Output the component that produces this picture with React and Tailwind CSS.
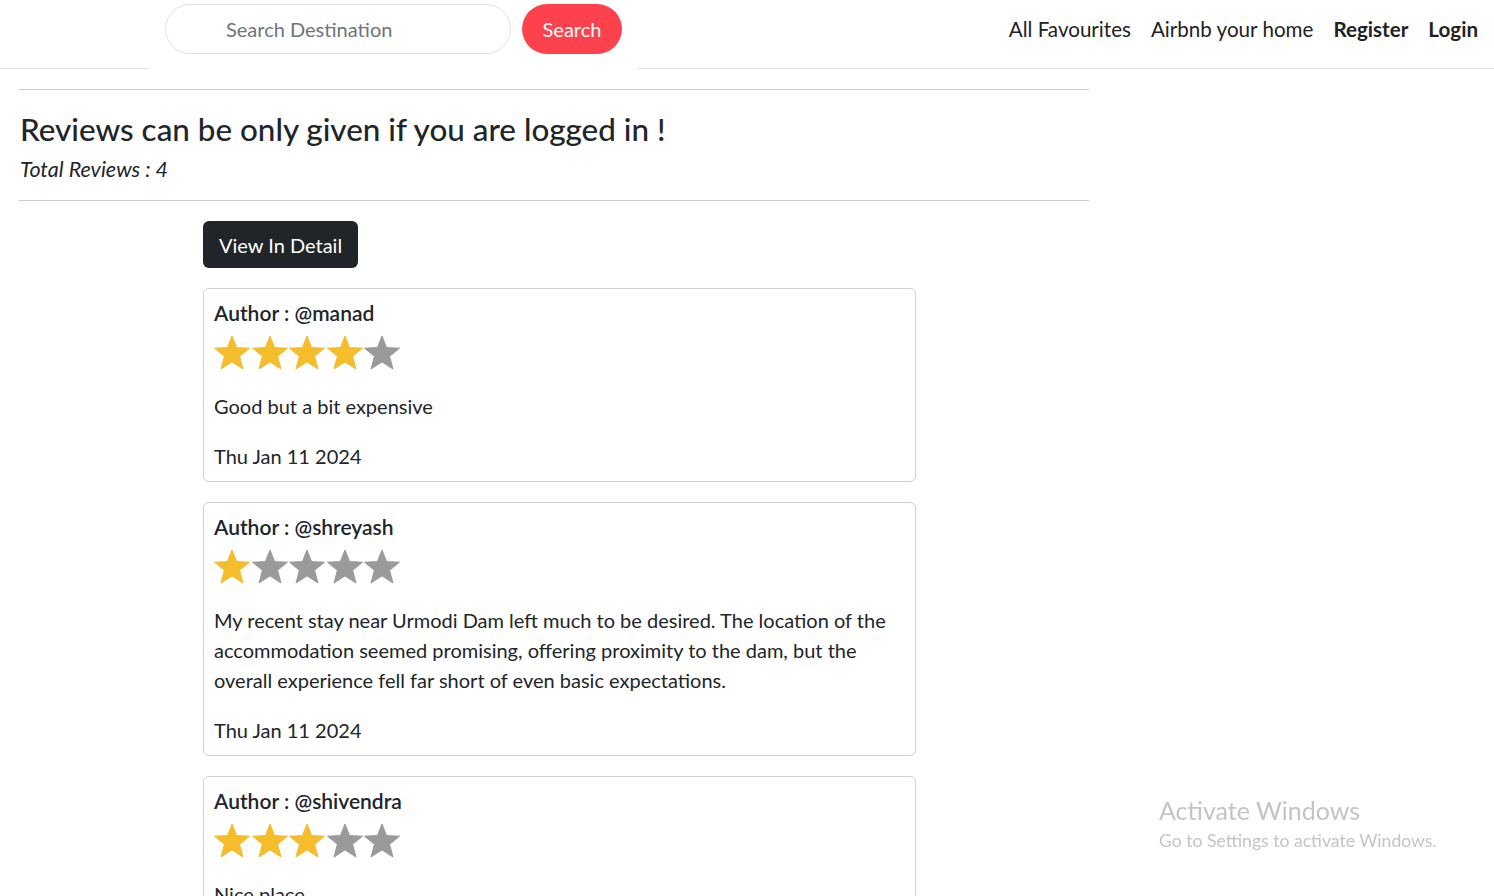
import React from "react";

const font = { fontFamily: '"Lato", "Open Sans", sans-serif' };

function Star({ filled }) {
  return (
    <svg width="38" height="35" viewBox="0 0 38 35" className="-mr-[0.5px] shrink-0">
      <polygon
        points="19,1 23.6,12.6 36.5,13.2 26.6,21.3 30,34 19,26.9 8,34 11.4,21.3 1.5,13.2 14.4,12.6"
        fill={filled ? "#f5bd2b" : "#9a9a9a"}
        stroke={filled ? "#f5bd2b" : "#9a9a9a"}
        strokeWidth="1"
        strokeLinejoin="round"
      />
    </svg>
  );
}

function Stars({ n }) {
  return (
    <div className="flex mt-[7px] h-[35px] -ml-[1px]">
      {[1, 2, 3, 4, 5].map((i) => (
        <Star key={i} filled={i <= n} />
      ))}
    </div>
  );
}

function Card({ author, rating, text, date }) {
  return (
    <div className="border border-[#cfcfcf] rounded-[6px] px-[10px] pt-[8px] pb-[10px]">
      <div className="text-[21px] leading-[31px] font-semibold text-[#212529]">Author : @{author}</div>
      <Stars n={rating} />
      <p className="mt-[21px] text-[20px] leading-[30px] text-[#212529]">{text}</p>
      {date && <p className="mt-[20px] text-[20px] leading-[30px] text-[#212529]">{date}</p>}
    </div>
  );
}

export default function App() {
  return (
    <div className="min-h-screen bg-white text-[#212529]" style={font}>
      <nav className="flex h-[69px]">
        <div className="w-[148px] border-b border-[#e2e3e6]"></div>
        <div className="w-[490px] flex items-start pt-[4px] pl-[17px] gap-[11px]">
          <div className="w-[346px] h-[50px] rounded-full border border-[#dee2e6] flex items-center pl-[60px] text-[20px] text-[#6c757d]">
            Search Destination
          </div>
          <button className="w-[100px] h-[50px] rounded-full bg-[#fe424d] text-white text-[20px]">Search</button>
        </div>
        <div className="flex-1 border-b border-[#e2e3e6] flex items-start justify-end pt-[14px] pr-[6px] text-[20.6px] leading-[30px] text-[#222]">
          <span className="px-[10px]">All Favourites</span>
          <span className="px-[10px]">Airbnb your home</span>
          <span className="px-[10px] font-bold">Register</span>
          <span className="px-[10px] font-bold">Login</span>
        </div>
      </nav>

      <main className="ml-[19px] w-[1070px] pt-[20px]">
        <hr className="border-0 border-t border-[#cbcbcb]" />
        <h4 className="mt-[21px] ml-[1px] text-[31.4px] leading-[36px] font-medium">Reviews can be only given if you are logged in !</h4>
        <p className="mt-[7px] ml-[1px] text-[21.5px] leading-[30px] italic">Total Reviews : 4</p>
        <hr className="mt-[16px] border-0 border-t border-[#cbcbcb]" />

        <div className="ml-[184px] w-[713px] pt-[20px] flex flex-col">
          <button className="self-start h-[47px] px-[16px] rounded-[6px] bg-[#212529] text-white text-[20px]">View In Detail</button>
          <div className="mt-[20px] flex flex-col gap-[20px]">
            <Card author="manad" rating={4} text="Good but a bit expensive" date="Thu Jan 11 2024" />
            <Card
              author="shreyash"
              rating={1}
              text="My recent stay near Urmodi Dam left much to be desired. The location of the accommodation seemed promising, offering proximity to the dam, but the overall experience fell far short of even basic expectations."
              date="Thu Jan 11 2024"
            />
            <Card author="shivendra" rating={3} text="Nice place" date="Thu Jan 11 2024" />
          </div>
        </div>
      </main>

      <div className="fixed left-[1159px] top-[794px] text-[#c4c4c4] pointer-events-none" style={font}>
        <div className="text-[25px] leading-[32px]">Activate Windows</div>
        <div className="text-[17.6px] leading-[22px] mt-[4px]">Go to Settings to activate Windows.</div>
      </div>
    </div>
  );
}
